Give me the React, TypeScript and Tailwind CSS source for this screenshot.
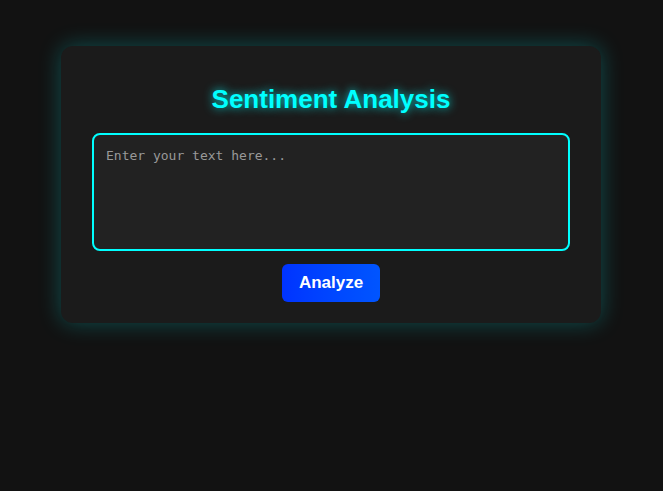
import React, { useState } from "react";

const App: React.FC = () => {
  const [text, setText] = useState("");

  return (
    <div className="min-h-screen w-full bg-[#121212] flex justify-center pt-[46px] pr-[1px] font-['Liberation_Sans',Arial,sans-serif]">
      <div className="w-[540px] h-[277px] rounded-[12px] bg-[#1b1b1b] shadow-[0_0_22px_rgba(0,255,255,0.25)] flex flex-col items-center pt-[38px]">
        <h2 className="text-[26px] leading-[30px] font-bold text-[#00ffff] [text-shadow:0_0_10px_rgba(0,255,255,0.8)]">
          Sentiment Analysis
        </h2>
        <textarea
          value={text}
          onChange={(e) => setText(e.target.value)}
          placeholder="Enter your text here..."
          className="mt-[19px] w-[478px] h-[118px] resize-none rounded-[8px] border-2 border-[#00ffff] bg-[#222222] p-[12px] pt-[13px] text-[13px] leading-[16px] text-[#dddddd] placeholder:text-[#999999] outline-none font-['DejaVu_Sans_Mono',monospace]"
        />
        <button className="mt-[13px] w-[98px] h-[38px] rounded-[6px] bg-gradient-to-r from-[#0033ff] to-[#0055ff] text-white font-bold text-[17px]">
          Analyze
        </button>
      </div>
    </div>
  );
};

export default App;
